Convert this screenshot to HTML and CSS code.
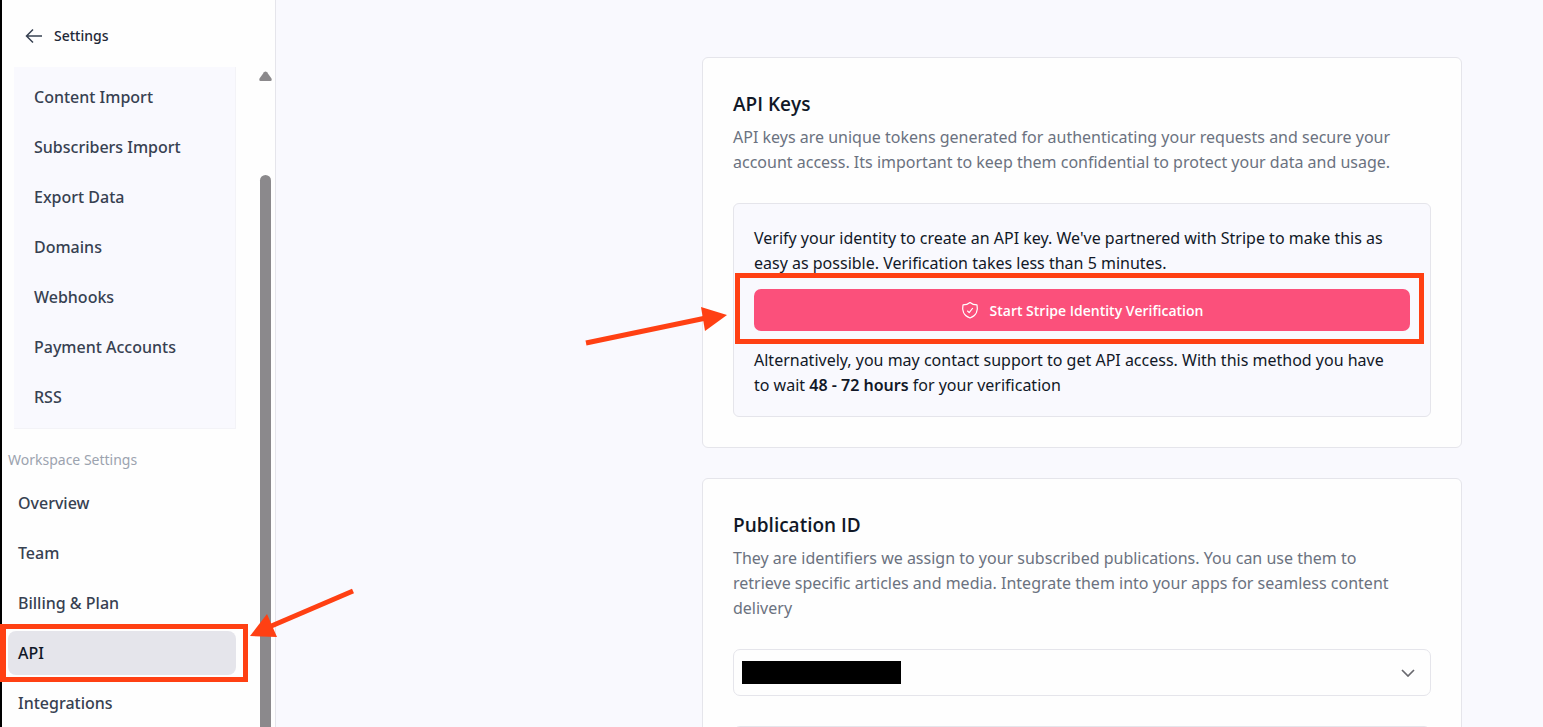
FILE: index.html
```html
<!DOCTYPE html>
<html lang="en">
<head>
<meta charset="utf-8">
<meta name="viewport" content="width=device-width, initial-scale=1">
<title>Settings - API</title>
<link rel="stylesheet" href="styles.css">
</head>
<body>
<div class="app">
  <aside class="sidebar">
    <a class="back" href="#">
      <svg class="back-icon" viewBox="0 0 18 16" aria-hidden="true"><path d="M8 1.5 1.5 8 8 14.5M1.5 8H17"/></svg>
      Settings
    </a>
    <div class="sidebar-body">
      <nav class="nav" aria-label="Settings">
        <ul class="nav-list nav-nested">
          <li><a class="nav-link" href="#">Content Import</a></li>
          <li><a class="nav-link" href="#">Subscribers Import</a></li>
          <li><a class="nav-link" href="#">Export Data</a></li>
          <li><a class="nav-link" href="#">Domains</a></li>
          <li><a class="nav-link" href="#">Webhooks</a></li>
          <li><a class="nav-link" href="#">Payment Accounts</a></li>
          <li><a class="nav-link" href="#">RSS</a></li>
        </ul>
        <h2 class="nav-title">Workspace Settings</h2>
        <ul class="nav-list">
          <li><a class="nav-link" href="#">Overview</a></li>
          <li><a class="nav-link" href="#">Team</a></li>
          <li><a class="nav-link" href="#">Billing &amp; Plan</a></li>
          <li class="marked">
            <a class="nav-link active" href="#" aria-current="page">API</a>
            <span class="frame frame-nav"></span>
            <svg class="arrow arrow-nav" viewBox="0 0 106 50" aria-hidden="true"><path class="shaft" d="M104 3 20 39"/><path class="head" d="M1 48 18 26 28 49Z"/></svg>
          </li>
          <li><a class="nav-link" href="#">Integrations</a></li>
        </ul>
      </nav>
      <div class="scrollbar" aria-hidden="true">
        <svg class="scroll-up" viewBox="0 0 13 10"><path d="M5 1.200Q6.500 0 8 1.200L12.500 7.500Q13.200 10 11.500 10H1.500Q-.2 10 .5 7.500Z"/></svg>
        <span class="scroll-thumb"></span>
      </div>
    </div>
  </aside>

  <main class="main">
    <div class="cards">
      <section class="card">
        <h1 class="card-title">API Keys</h1>
        <p class="card-text">API keys are unique tokens generated for authenticating your requests and secure your<br> account access. Its important to keep them confidential to protect your data and usage.</p>
        <div class="notice">
          <p>Verify your identity to create an API key. We've partnered with Stripe to make this as<br> easy as possible. Verification takes less than 5 minutes.</p>
          <div class="marked verify">
            <button class="button" type="button">
              <svg class="shield" viewBox="0 0 18 18" aria-hidden="true"><path d="M9 1.500C7 3.200 4.500 3.900 2 3.900 1 8.500 2 14.500 9 17 16 14.500 17 8.500 16 3.900 13.500 3.900 11 3.200 9 1.500ZM6.300 9.800 8.200 11.600 11.800 7"/></svg>
              Start Stripe Identity Verification
            </button>
            <span class="frame frame-button"></span>
            <svg class="arrow arrow-button" viewBox="0 0 144 42" aria-hidden="true"><path class="shaft" d="M1 37 121 12"/><path class="head" d="M142 9 116 1 120 25Z"/></svg>
          </div>
          <p>Alternatively, you may contact support to get API access. With this method you have<br> to wait <strong>48 - 72 hours</strong> for your verification</p>
        </div>
      </section>

      <section class="card">
        <h2 class="card-title">Publication ID</h2>
        <p class="card-text">They are identifiers we assign to your subscribed publications. You can use them to<br> retrieve specific articles and media. Integrate them into your apps for seamless content<br> delivery</p>
        <div class="picker">
          <select class="field" aria-label="Publication"><option></option></select>
          <span class="redacted"></span>
          <svg class="chevron" viewBox="0 0 14 8" aria-hidden="true"><path d="M1 1 7 7 13 1"/></svg>
        </div>
        <input class="field" type="text" aria-label="Publication ID" readonly>
      </section>
    </div>
  </main>
</div>
</body>
</html>
```

FILE: styles.css
```css
* {
  box-sizing: border-box;
}

body {
  margin: 0;
  font-family: "Noto Sans", "Open Sans", sans-serif;
  font-size: 16px;
  line-height: 25px;
  color: #111827;
}

h1, h2, p, ul {
  margin: 0;
  padding: 0;
}

.app {
  display: flex;
  height: 100vh;
  overflow: hidden;
  background: #f9f9fe;
}

/* Sidebar */
.sidebar {
  position: relative;
  z-index: 1;
  display: flex;
  flex-direction: column;
  flex: 0 0 276px;
  background: #fefefe;
  border-left: 2px solid #000;
  border-right: 1px solid #e5e5eb;
}

.back {
  display: flex;
  align-items: center;
  gap: 11px;
  padding: 23px 23px 19px;
  font-size: 14px;
  font-weight: 500;
  color: #1f2937;
  text-decoration: none;
}

.back-icon {
  width: 18px;
  height: 16px;
  fill: none;
  stroke: #374151;
  stroke-width: 1.5;
}

.sidebar-body {
  display: flex;
  flex: 1;
  min-height: 0;
}

.nav {
  flex: 1;
  padding: 0 23px 0 6px;
}

.nav-list {
  display: flex;
  flex-direction: column;
  gap: 6px;
  list-style: none;
}

.nav-nested {
  margin-left: 6px;
  padding: 8px 0 9px 10px;
  background: #f9f9fe;
  border-bottom: 1px solid #f3f3f7;
  border-right: 1px solid #f3f3f7;
}

.nav-link {
  display: block;
  height: 44px;
  padding: 0 10px;
  line-height: 44px;
  font-weight: 500;
  color: #374151;
  text-decoration: none;
  border-radius: 8px;
}

.nav-link.active {
  background: #e5e5eb;
  color: #111827;
}

.nav-title {
  padding: 20px 0 10px;
  font-size: 14px;
  line-height: 22px;
  font-weight: 400;
  color: #9ca3af;
}

.scrollbar {
  display: flex;
  flex-direction: column;
  align-items: center;
  gap: 94px;
  width: 13px;
  margin-right: 3px;
  padding-top: 4px;
}

.scroll-up {
  flex: none;
  width: 13px;
  height: 10px;
  fill: #8b898c;
}

.scroll-thumb {
  flex: 1;
  width: 11px;
  background: #8b898c;
  border-radius: 6px 6px 0 0;
}

/* Main column */
.main {
  flex: 1;
  min-width: 0;
  padding: 57px 81px 0;
}

.cards {
  display: flex;
  flex-direction: column;
  gap: 30px;
  max-width: 760px;
  margin-left: auto;
}

.card {
  padding: 30px;
  background: #fefefe;
  border: 1px solid #e5e5eb;
  border-radius: 6px;
}

.card-title {
  font-family: "Open Sans", "Noto Sans", sans-serif;
  font-size: 19px;
  line-height: 32px;
  font-weight: 600;
}

.card-text {
  margin: 5px 0 28px;
  color: #6b7280;
}

.notice {
  padding: 22px 20px 18px;
  background: #f9f9fe;
  border: 1px solid #e5e5eb;
  border-radius: 6px;
}

.notice strong {
  font-weight: 600;
}

.verify {
  margin: 13px 0 17px;
}

.button {
  display: flex;
  align-items: center;
  justify-content: center;
  gap: 11px;
  width: 100%;
  height: 42px;
  border: 0;
  border-radius: 7px;
  background: #fb507b;
  color: #fff;
  font-family: "Open Sans", "Noto Sans", sans-serif;
  font-size: 14px;
  font-weight: 600;
}

.shield {
  width: 18px;
  height: 18px;
  fill: none;
  stroke: #fff;
  stroke-width: 1.2;
  stroke-linejoin: round;
}

.picker {
  position: relative;
  margin-bottom: 30px;
}

.field {
  display: block;
  width: 100%;
  height: 47px;
  appearance: none;
  background: #fefefe;
  border: 1px solid #e5e5eb;
  border-radius: 7px;
  font: inherit;
}

.redacted {
  position: absolute;
  left: 9px;
  top: 12px;
  width: 159px;
  height: 23px;
  background: #000;
}

.chevron {
  position: absolute;
  right: 16px;
  top: 20px;
  width: 14px;
  height: 8px;
  fill: none;
  stroke: #68686e;
  stroke-width: 1.7;
}

/* Callouts drawn over the page */
.marked {
  position: relative;
}

.frame {
  position: absolute;
  border: 5px solid #ff4013;
  pointer-events: none;
}

.frame-nav {
  inset: -7px -12px -7px -8px;
  border-left-width: 6px;
}

.frame-button {
  inset: -16px -14px -13px -19px;
}

.arrow {
  position: absolute;
  overflow: visible;
  pointer-events: none;
}

.arrow .shaft {
  fill: none;
  stroke: #ff4013;
  stroke-width: 5;
}

.arrow .head {
  fill: #ff4013;
}

.arrow-nav {
  left: 241px;
  top: -43px;
  width: 106px;
  height: 50px;
}

.arrow-button {
  right: 681px;
  top: 17px;
  width: 144px;
  height: 42px;
}
```
